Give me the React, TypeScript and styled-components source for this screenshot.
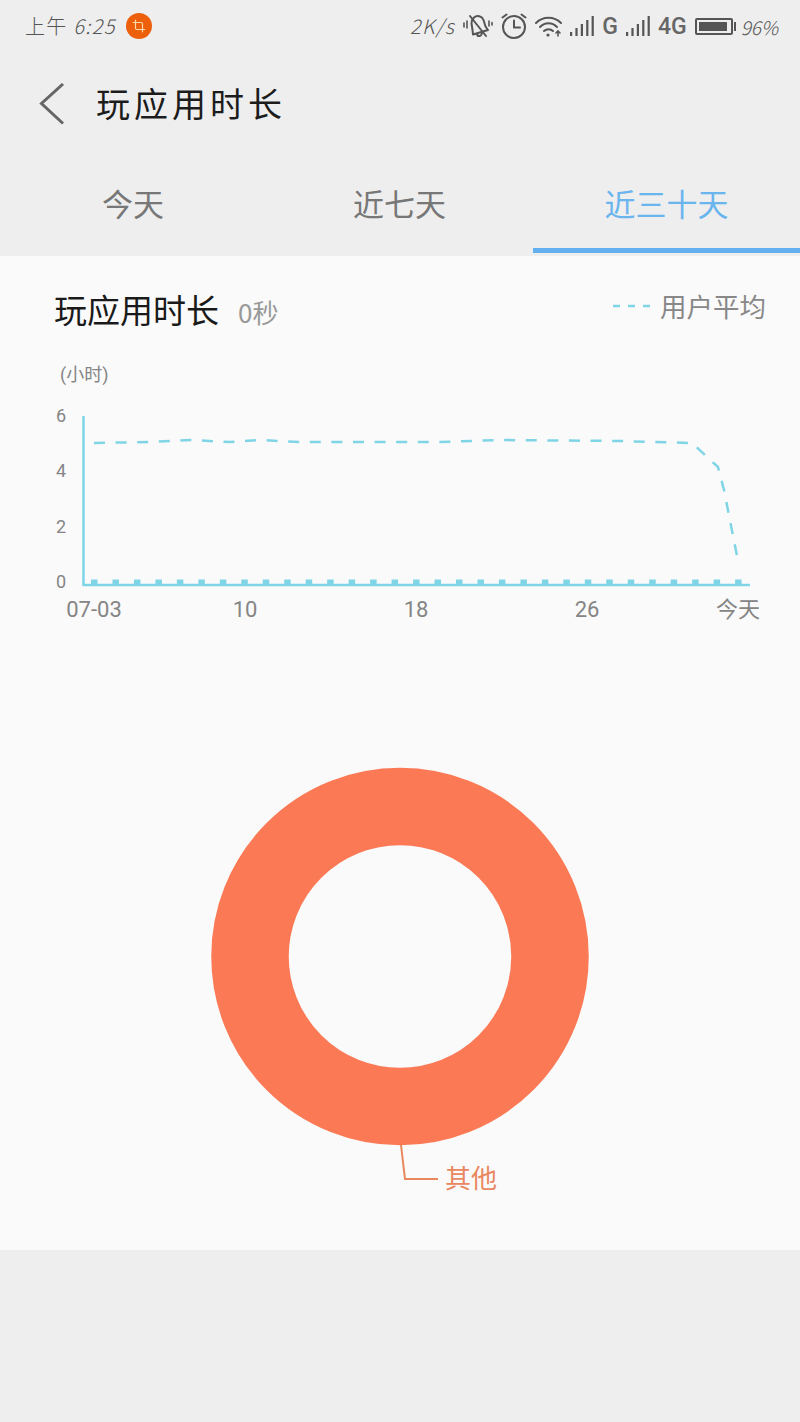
import React from 'react';
import styled, { createGlobalStyle } from 'styled-components';
import { Crop } from 'lucide-react';

const CJK = '"Noto Sans CJK SC", "Noto Sans", sans-serif';
const LINE = '#7fd5e6';
const ICON = '#555';

const GlobalStyle = createGlobalStyle`
  html, body {
    margin: 0;
    padding: 0;
    background: #eeeeee;
  }
  body {
    font-family: Roboto, ${CJK};
  }
`;

const Page = styled.div`
  width: 800px;
  height: 1422px;
  background: #eeeeee;
  overflow: hidden;
`;

const StatusBar = styled.div`
  height: 52px;
  padding: 0 22px 0 25px;
  display: flex;
  align-items: center;
  justify-content: space-between;
  color: ${ICON};
`;

const StatusGroup = styled.div`
  display: flex;
  align-items: center;
  gap: 8px;
`;

const StatusText = styled.span<{ $spaced?: boolean }>`
  font-family: ${CJK};
  font-size: 20px;
  font-weight: 300;
  letter-spacing: ${(p) => (p.$spaced ? 1.3 : 0)}px;
  line-height: 1;
  white-space: nowrap;
`;

const Slanted = styled.span`
  font-style: italic;
`;

const Network = styled.span`
  font-family: Roboto, sans-serif;
  font-size: 23px;
  font-weight: 500;
  line-height: 1;
  color: #666;
`;

const Badge = styled.span`
  width: 26px;
  height: 26px;
  margin-left: 2px;
  border-radius: 50%;
  background: #ee5f0c;
  color: #f8d9a8;
  display: flex;
  align-items: center;
  justify-content: center;
`;

const Battery = styled.span`
  width: 38px;
  height: 17px;
  padding: 2px;
  box-sizing: border-box;
  border: 2px solid ${ICON};
  border-radius: 2px;
  margin-right: 3px;
  position: relative;
  &::before {
    content: '';
    display: block;
    height: 100%;
    width: 96%;
    background: ${ICON};
  }
  &::after {
    content: '';
    position: absolute;
    right: -5px;
    top: 2px;
    width: 2px;
    height: 9px;
    background: ${ICON};
  }
`;

const Percent = styled(StatusText)`
  margin-left: -3px;
  font-size: 19px;
`;

const Header = styled.div`
  height: 104px;
  padding-left: 39px;
  display: flex;
  align-items: center;
`;

const Title = styled.h1`
  margin: -4px 0 0 31px;
  font-family: ${CJK};
  font-size: 34px;
  font-weight: 400;
  letter-spacing: 4px;
  color: #1c1c1c;
`;

const Tabs = styled.div`
  height: 100px;
  display: grid;
  grid-template-columns: 266px 267px 267px;
`;

const Tab = styled.div<{ $active?: boolean }>`
  display: flex;
  align-items: center;
  justify-content: center;
  box-sizing: border-box;
  height: 97px;
  font-family: ${CJK};
  font-size: 31px;
  color: ${(p) => (p.$active ? '#6ab5ee' : '#777')};
  border-bottom: 5px solid ${(p) => (p.$active ? '#62b0f0' : 'transparent')};
`;

const Panel = styled.div`
  height: 994px;
  background: #fafafa;
  display: flex;
  flex-direction: column;
`;

const SummaryRow = styled.div`
  height: 104px;
  padding: 1px 34px 0 54px;
  box-sizing: border-box;
  display: flex;
  justify-content: space-between;
  align-items: center;
`;

const SummaryLeft = styled.div`
  display: flex;
  align-items: baseline;
  gap: 19px;
  font-family: ${CJK};
`;

const SummaryTitle = styled.span`
  font-size: 33px;
  color: #1a1a1a;
`;

const SummaryValue = styled.span`
  font-size: 26px;
  color: #999;
`;

const Legend = styled.div`
  display: flex;
  align-items: center;
  gap: 10px;
  margin-top: -6px;
  font-family: ${CJK};
  font-size: 26.5px;
  color: #888;
`;

const ChartSvg = styled.svg`
  display: block;
  flex: none;
`;

const AxisLabel = styled.text<{ $size: number }>`
  font-family: Roboto, ${CJK};
  font-size: ${(p) => p.$size}px;
  fill: #858585;
`;

const DonutLabel = styled.text`
  font-family: ${CJK};
  font-size: 26px;
  fill: #e9875f;
`;

const SilentBell = () => (
  <svg width="30" height="26" viewBox="0 0 30 26" fill="none" stroke={ICON} strokeWidth="2" strokeLinecap="round" strokeLinejoin="round">
    <path d="M11 4.5 C14 2 19 3 20.5 7 L22.5 13.5 L25 17 L10 21.5 L9.5 17 L8.5 10.5 C8.5 8 9.5 6 11 4.5 Z" />
    <path d="M14 21 C14.5 24 18.5 24 19 19.5" />
    <path d="M7 3 L23 23" />
    <path d="M1 10 V14 M4 8 V15 M26 8 V13 M29 9.5 V12" strokeWidth="1.6" />
  </svg>
);

const Alarm = () => (
  <svg width="26" height="26" viewBox="0 0 26 26" fill="none" stroke={ICON} strokeWidth="2" strokeLinecap="round" strokeLinejoin="round">
    <circle cx="13" cy="14" r="11" />
    <path d="M13 7.5 V14.5 H19" />
    <path d="M1.5 4.5 L5.5 1.5 M24.5 4.5 L20.5 1.5" />
  </svg>
);

const WifiPlus = () => (
  <svg width="27" height="21" viewBox="0 0 27 21" fill="none" stroke={ICON} strokeWidth="2" strokeLinecap="round">
    <path d="M1 7 C8 0 19 0 26 7" />
    <path d="M5 11 C10 6 17 6 22 11" />
    <path d="M9 15 C11.5 12.5 15.5 12.5 18 15" />
    <circle cx="13" cy="19" r="1.6" fill={ICON} stroke="none" />
    <path d="M23 20 V15 M21 17 L23 15 L25 17" strokeWidth="1.6" />
  </svg>
);

const Signal = () => (
  <svg width="24" height="20" viewBox="0 0 24 20" fill={ICON}>
    <rect x="0" y="16" width="2.2" height="4" />
    <rect x="5.4" y="12" width="2.2" height="8" />
    <rect x="10.8" y="8" width="2.2" height="12" />
    <rect x="16.2" y="4" width="2.2" height="16" />
    <rect x="21.6" y="0" width="2.2" height="20" />
  </svg>
);

const BackArrow = () => (
  <svg width="26" height="42" viewBox="0 0 26 42" fill="none" stroke="#666" strokeWidth="3">
    <path d="M24 1 L2.5 20.5 L24 40.5" />
  </svg>
);

const AVERAGE =
  'M94 443 L150 442 L190 440 L230 442 L260 440 L300 442 L440 442 L500 440 L620 441 L692 443 L718 467 L724 490 L737 556';

const bars = Array.from({ length: 31 }, (_, i) => 91 + i * 21.47);
const yLabels: [string, number][] = [['6', 422], ['4', 477], ['2', 533], ['0', 588]];
const xLabels: [string, number][] = [['07-03', 94], ['10', 245], ['18', 416], ['26', 587], ['今天', 738]];

export default function App() {
  return (
    <Page>
      <GlobalStyle />
      <StatusBar>
        <StatusGroup>
          <StatusText $spaced>
            上午 <Slanted>6:25</Slanted>
          </StatusText>
          <Badge>
            <Crop size={14} strokeWidth={2} />
          </Badge>
        </StatusGroup>
        <StatusGroup>
          <StatusText $spaced>
            <Slanted>2K/s</Slanted>
          </StatusText>
          <SilentBell />
          <Alarm />
          <WifiPlus />
          <Signal />
          <Network>G</Network>
          <Signal />
          <Network>4G</Network>
          <Battery />
          <Percent>
            <Slanted>96%</Slanted>
          </Percent>
        </StatusGroup>
      </StatusBar>

      <Header>
        <BackArrow />
        <Title>玩应用时长</Title>
      </Header>

      <Tabs>
        <Tab>今天</Tab>
        <Tab>近七天</Tab>
        <Tab $active>近三十天</Tab>
      </Tabs>

      <Panel>
        <SummaryRow>
          <SummaryLeft>
            <SummaryTitle>玩应用时长</SummaryTitle>
            <SummaryValue>0秒</SummaryValue>
          </SummaryLeft>
          <Legend>
            <svg width="37" height="4" viewBox="0 0 37 4">
              <line x1="0" y1="2" x2="37" y2="2" stroke={LINE} strokeWidth="2.5" strokeDasharray="7 8" />
            </svg>
            用户平均
          </Legend>
        </SummaryRow>

        <ChartSvg width="800" height="270" viewBox="0 360 800 270">
          <AxisLabel $size={18} x="60" y="381">(小时)</AxisLabel>
          {yLabels.map(([label, y]) => (
            <AxisLabel key={label} $size={18} x="56" y={y}>{label}</AxisLabel>
          ))}
          <path d="M83.5 416 V585 H750" fill="none" stroke={LINE} strokeWidth="2.5" />
          {bars.map((x) => (
            <rect key={x} x={x} y="579.5" width="6.5" height="5.5" fill={LINE} />
          ))}
          <path d={AVERAGE} fill="none" stroke={LINE} strokeWidth="2.5" strokeDasharray="11 10.6" />
          {xLabels.map(([label, x]) => (
            <AxisLabel key={label} $size={22} x={x} y="617" textAnchor="middle">{label}</AxisLabel>
          ))}
        </ChartSvg>

        <ChartSvg width="800" height="620" viewBox="0 630 800 620">
          <circle cx="400" cy="956.5" r="150" fill="none" stroke="#fb7a55" strokeWidth="77.5" />
          <path d="M401 1145 L405 1179 H438" fill="none" stroke="#e9875f" strokeWidth="2" />
          <DonutLabel x="445" y="1188">其他</DonutLabel>
        </ChartSvg>
      </Panel>
    </Page>
  );
}
